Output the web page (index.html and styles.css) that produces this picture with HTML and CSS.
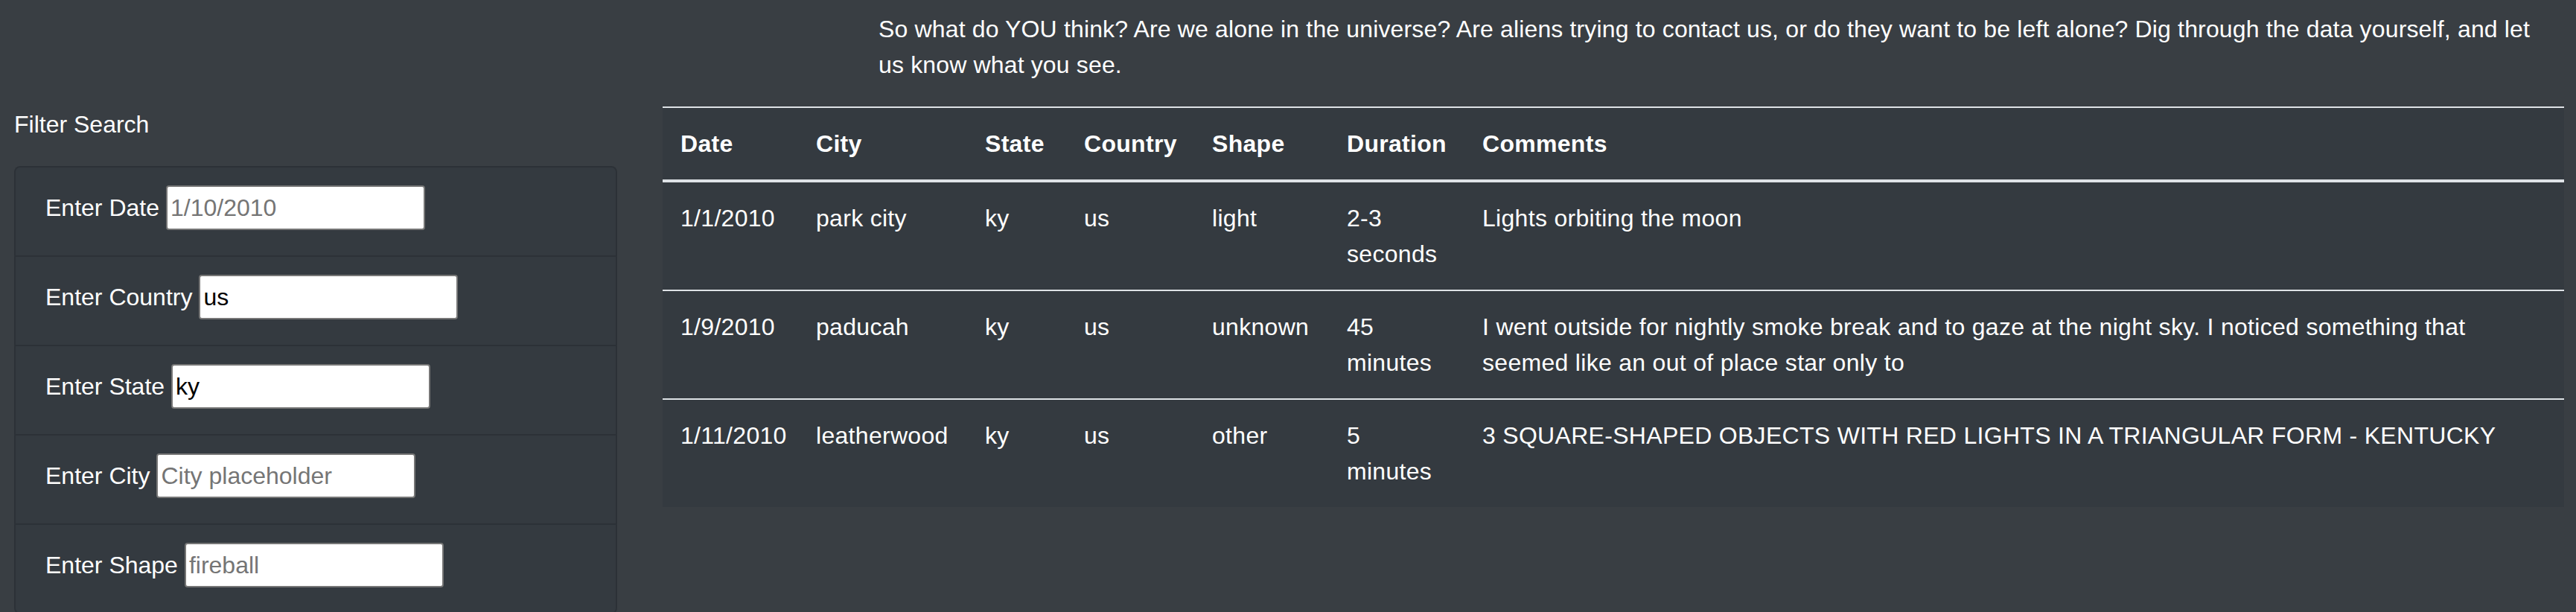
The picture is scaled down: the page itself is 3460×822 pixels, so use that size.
FILE: index.html
```
<!DOCTYPE html>
<html lang="en">
<head>
<meta charset="utf-8">
<title>UFO Sightings</title>
<link rel="stylesheet" href="styles.css">
</head>
<body>
<section class="intro">
  <p class="intro-text">So what do YOU think? Are we alone in the universe? Are aliens trying to contact us, or do they want to be left alone? Dig through the data yourself, and let us know what you see.</p>
</section>
<main class="content">
  <aside class="filters">
    <p class="filter-title">Filter Search</p>
    <ul class="filter-list">
      <li class="filter-item"><label for="datetime">Enter Date</label><input id="datetime" class="filter-input" type="text" placeholder="1/10/2010"></li>
      <li class="filter-item"><label for="country">Enter Country</label><input id="country" class="filter-input" type="text" value="us"></li>
      <li class="filter-item"><label for="state">Enter State</label><input id="state" class="filter-input" type="text" value="ky"></li>
      <li class="filter-item"><label for="city">Enter City</label><input id="city" class="filter-input" type="text" placeholder="City placeholder"></li>
      <li class="filter-item"><label for="shape">Enter Shape</label><input id="shape" class="filter-input" type="text" placeholder="fireball"></li>
    </ul>
  </aside>
  <div class="results">
    <table class="ufo-table">
      <colgroup>
        <col class="col-date">
        <col class="col-city">
        <col class="col-state">
        <col class="col-country">
        <col class="col-shape">
        <col class="col-duration">
        <col class="col-comments">
      </colgroup>
      <thead>
        <tr>
          <th>Date</th>
          <th>City</th>
          <th>State</th>
          <th>Country</th>
          <th>Shape</th>
          <th>Duration</th>
          <th>Comments</th>
        </tr>
      </thead>
      <tbody>
        <tr>
          <td>1/1/2010</td>
          <td>park city</td>
          <td>ky</td>
          <td>us</td>
          <td>light</td>
          <td>2-3 seconds</td>
          <td>Lights orbiting the moon</td>
        </tr>
        <tr>
          <td>1/9/2010</td>
          <td>paducah</td>
          <td>ky</td>
          <td>us</td>
          <td>unknown</td>
          <td>45 minutes</td>
          <td>I went outside for nightly smoke break and to gaze at the night sky. I noticed something that seemed like an out of place star only to</td>
        </tr>
        <tr>
          <td>1/11/2010</td>
          <td>leatherwood</td>
          <td>ky</td>
          <td>us</td>
          <td>other</td>
          <td>5 minutes</td>
          <td>3 SQUARE-SHAPED OBJECTS WITH RED LIGHTS IN A TRIANGULAR FORM - KENTUCKY</td>
        </tr>
      </tbody>
    </table>
  </div>
</main>
</body>
</html>
```

FILE: styles.css
```
* {
  box-sizing: border-box;
}

html, body {
  margin: 0;
  padding: 0;
}

body {
  background: #393e43;
  color: #ffffff;
  font-family: "Liberation Sans", Arial, sans-serif;
  font-size: 32px;
  line-height: 48px;
  overflow: hidden;
}

.intro {
  padding: 15px 0 0 1180px;
}

.intro-text {
  margin: 0 0 32px 0;
  max-width: 2246px;
  letter-spacing: 0.15px;
}

.content {
  display: flex;
  align-items: flex-start;
}

.filters {
  flex: none;
  width: 810px;
  margin-left: 19px;
}

.filter-title {
  margin: 0 0 32px 0;
}

.filter-list {
  list-style: none;
  margin: 0;
  padding: 0;
}

.filter-item {
  display: flex;
  align-items: baseline;
  gap: 9px;
  padding: 24px 40px 34px 40px;
  background: #343a40;
  border: 2px solid rgba(0, 0, 0, 0.14);
  margin-top: -2px;
}

.filter-item:first-child {
  margin-top: 0;
  border-radius: 8px 8px 0 0;
}

.filter-item:last-child {
  border-radius: 0 0 8px 8px;
}

.filter-input {
  width: 348px;
  height: 60px;
  border: 2px solid #767676;
  border-radius: 4px;
  padding: 4px 6px 4px 4px;
  background: #ffffff;
  color: #000000;
  font-family: inherit;
  font-size: 32px;
  line-height: 48px;
  outline: none;
}

.filter-input::placeholder {
  color: #757575;
  opacity: 1;
}

.results {
  flex: 1;
  margin-left: 61px;
  margin-right: 16px;
}

.ufo-table {
  width: 100%;
  table-layout: fixed;
  border-collapse: collapse;
  background: #343a40;
  letter-spacing: 0.3px;
}

.col-date { width: 182px; }
.col-city { width: 227px; }
.col-state { width: 133px; }
.col-country { width: 172px; }
.col-shape { width: 181px; }
.col-duration { width: 182px; }

.ufo-table th,
.ufo-table td {
  padding: 24px;
  text-align: left;
  vertical-align: top;
  border-top: 2px solid #dee2e6;
}

.ufo-table thead th {
  font-weight: bold;
  vertical-align: bottom;
  border-bottom: 4px solid #dee2e6;
}
```
